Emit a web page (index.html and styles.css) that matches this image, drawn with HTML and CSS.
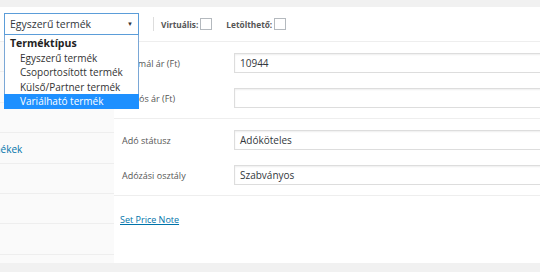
FILE: index.html
```html
<!DOCTYPE html>
<html lang="hu">
<head>
    <meta charset="UTF-8">
    <title>Termékadatok</title>
    <link rel="stylesheet" href="styles.css">
</head>
<body>
    <div class="panel">
        <div class="panel-head">
            <div class="type-select">
                <div class="select-box">
                    <span>Egyszerű termék</span>
                    <span class="arrow">▼</span>
                </div>
                <ul class="select-list">
                    <li class="group">Terméktípus</li>
                    <li>Egyszerű termék</li>
                    <li>Csoportosított termék</li>
                    <li>Külső/Partner termék</li>
                    <li class="selected">Variálható termék</li>
                </ul>
            </div>
            <span class="divider"></span>
            <label class="check">Virtuális:<span class="box"></span></label>
            <label class="check">Letölthető:<span class="box"></span></label>
        </div>
        <div class="panel-body">
            <ul class="tabs">
                <li></li>
                <li></li>
                <li></li>
                <li class="link-row"><a href="#">Kapcsolt termékek</a></li>
                <li></li>
                <li></li>
                <li></li>
            </ul>
            <div class="main">
                <div class="group-fields">
                    <div class="field"><label>Normál ár (Ft)</label><input type="text" value="10944"></div>
                    <div class="field"><label>Akciós ár (Ft)</label><input type="text" value=""></div>
                </div>
                <div class="group-fields">
                    <div class="field"><label>Adó státusz</label><div class="fake-select">Adóköteles</div></div>
                    <div class="field"><label>Adózási osztály</label><div class="fake-select">Szabványos</div></div>
                </div>
                <div class="note">
                    <a href="#">Set Price Note</a>
                </div>
            </div>
        </div>
    </div>
</body>
</html>
```

FILE: styles.css
```css
body {
    margin: 0;
    background: #f1f1f1;
    font-family: "Open Sans", Arial, sans-serif;
    color: #32373c;
    overflow: hidden;
    width: 540px;
    height: 272px;
}
.panel {
    margin-top: 7px;
    background: #fff;
    width: 640px;
}
.panel-head {
    height: 35px;
    border-bottom: 1px solid #eee;
    display: flex;
    align-items: center;
    padding-left: 4px;
    box-sizing: border-box;
}
.type-select {
    position: relative;
    width: 135px;
    margin-top: -1px;
}
.select-box {
    height: 22px;
    border: 1px solid #5b9dd9;
    box-sizing: border-box;
    display: flex;
    align-items: center;
    justify-content: space-between;
    padding: 0 5px 0 5px;
    font-size: 10.5px;
    color: #32373c;
    background: #fff;
}
.select-box .arrow { font-size: 6px; color: #333; }
.select-list {
    position: absolute;
    top: 22px;
    left: 0;
    width: 135px;
    box-sizing: border-box;
    margin: 0;
    padding: 0;
    list-style: none;
    background: #fff;
    border: 1px solid #7aa7d6;
    border-top: none;
    font-size: 10px;
    z-index: 5;
}
.select-list li { height: 14.6px; line-height: 14.6px; padding-left: 15px; color: #333; white-space: nowrap; }
.select-list li.group { padding-left: 5px; font-size: 10.5px; font-weight: bold; color: #222; height: 16px; line-height: 17px; }
.select-list li.selected { background: #1e90ff; color: #fff; margin: 0 -1px -1px; padding-left: 16px; }
.divider {
    width: 1px;
    height: 14px;
    background: #ddd;
    margin: 0 7px 0 14px;
}
.check {
    font-size: 8.3px;
    font-weight: bold;
    color: #555;
    display: flex;
    align-items: center;
    margin-right: 14px;
}
.check .box {
    width: 10px;
    height: 10px;
    border: 1px solid #b4b9be;
    margin-left: 2px;
    background: #fff;
}
.panel-body {
    display: flex;
    height: 221px;
}
.tabs {
    width: 114px;
    margin: 0;
    padding: 0;
    list-style: none;
    background: #fafafa;
    overflow: hidden;
}
.tabs li {
    height: 29.4px;
    border-bottom: 1px solid #eee;
    font-size: 10px;
    display: flex;
    align-items: center;
}
.link-row a {
    color: #0073aa;
    text-decoration: none;
    margin: 3px 0 0 -64px;
    white-space: nowrap;
}
.main { flex: 1; }
.group-fields {
    border-bottom: 1px solid #eee;
    padding: 11px 0 10px;
}
.field {
    display: flex;
    align-items: center;
    height: 20px;
    margin-bottom: 15px;
}
.field:last-child { margin-bottom: 0; }
.field label {
    width: 112px;
    padding-left: 8px;
    font-size: 9px;
    color: #555;
}
.field input, .fake-select {
    width: 320px;
    height: 20px;
    box-sizing: border-box;
    border: 1px solid #ddd;
    box-shadow: inset 0 1px 2px rgba(0,0,0,0.07);
    font-family: "Open Sans", Arial, sans-serif;
    font-size: 10px;
    color: #32373c;
    padding: 0 5px;
    margin: 0;
    outline: none;
}
.fake-select { display: flex; align-items: center; }
.note { padding: 17px 6px; font-size: 9px; }
.note a { color: #0073aa; }
```
